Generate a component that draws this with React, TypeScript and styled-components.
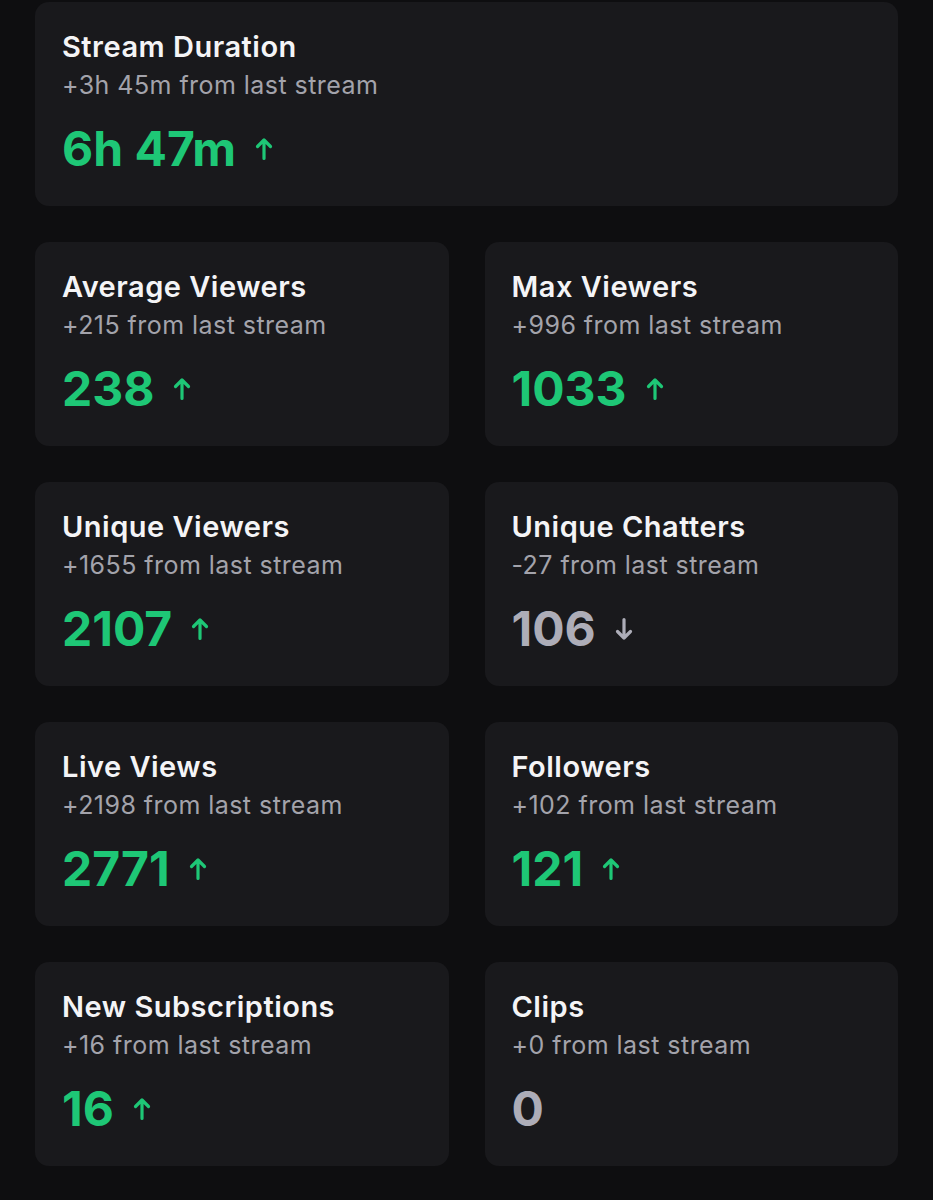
import styled, { createGlobalStyle } from 'styled-components';

type Stat = {
  title: string;
  delta: string;
  value: string;
  trend?: 'up' | 'down';
};

const stats: Stat[] = [
  { title: 'Average Viewers', delta: '+215 from last stream', value: '238', trend: 'up' },
  { title: 'Max Viewers', delta: '+996 from last stream', value: '1033', trend: 'up' },
  { title: 'Unique Viewers', delta: '+1655 from last stream', value: '2107', trend: 'up' },
  { title: 'Unique Chatters', delta: '-27 from last stream', value: '106', trend: 'down' },
  { title: 'Live Views', delta: '+2198 from last stream', value: '2771', trend: 'up' },
  { title: 'Followers', delta: '+102 from last stream', value: '121', trend: 'up' },
  { title: 'New Subscriptions', delta: '+16 from last stream', value: '16', trend: 'up' },
  { title: 'Clips', delta: '+0 from last stream', value: '0' },
];

const Arrow = ({ dir }: { dir: 'up' | 'down' }) => (
  <TrendIcon viewBox='0 0 18 24' $dir={dir}>
    <path d='M9 21.5V3M2.5 9.5L9 3l6.5 6.5' />
  </TrendIcon>
);

const StatCard = ({ title, delta, value, trend }: Stat) => (
  <Card>
    <Title>{title}</Title>
    <Delta>{delta}</Delta>
    <ValueRow $up={trend === 'up'}>
      <span>{value}</span>
      {trend && <Arrow dir={trend} />}
    </ValueRow>
  </Card>
);

const App = () => {
  return (
    <Page>
      <GlobalStyle />
      <StatCard title='Stream Duration' delta='+3h 45m from last stream' value='6h 47m' trend='up' />
      <Grid>
        {stats.map((item) => (
          <StatCard key={item.title} {...item} />
        ))}
      </Grid>
    </Page>
  );
};

const GlobalStyle = createGlobalStyle`
  body {
    margin: 0;
    background: #0e0e10;
    font-family: Inter, 'Noto Sans', sans-serif;
  }
`;

const Page = styled.div`
  display: flex;
  flex-direction: column;
  gap: 36px;
  padding: 2px 35px 34px 35px;
  width: 933px;
  box-sizing: border-box;
`;

const Grid = styled.div`
  display: grid;
  grid-template-columns: 1fr 1fr;
  gap: 36px 36px;
`;

const Card = styled.div`
  background: #19191c;
  border-radius: 14px;
  height: 204px;
  box-sizing: border-box;
  padding: 27px 27px 0 27px;
  display: flex;
  flex-direction: column;
`;

const Title = styled.div`
  color: #f4f4f6;
  font-size: 29px;
  font-weight: 600;
  line-height: 36px;
  letter-spacing: 0.5px;
`;

const Delta = styled.div`
  color: #a3a3ab;
  font-size: 25px;
  font-weight: 400;
  line-height: 32px;
  letter-spacing: 0.45px;
  margin-top: 4px;
`;

const ValueRow = styled.div<{ $up: boolean }>`
  display: flex;
  align-items: center;
  gap: 19px;
  margin-top: 21px;
  color: ${(p) => (p.$up ? '#1ec776' : '#adadb8')};
  font-size: 48px;
  font-weight: 700;
  line-height: 54px;
`;

const TrendIcon = styled.svg<{ $dir: 'up' | 'down' }>`
  width: 18px;
  height: 24px;
  fill: none;
  stroke: currentColor;
  stroke-width: 3.2;
  stroke-linecap: round;
  stroke-linejoin: round;
  transform: ${(p) => (p.$dir === 'down' ? 'rotate(180deg)' : 'none')};
`;

export default App;
